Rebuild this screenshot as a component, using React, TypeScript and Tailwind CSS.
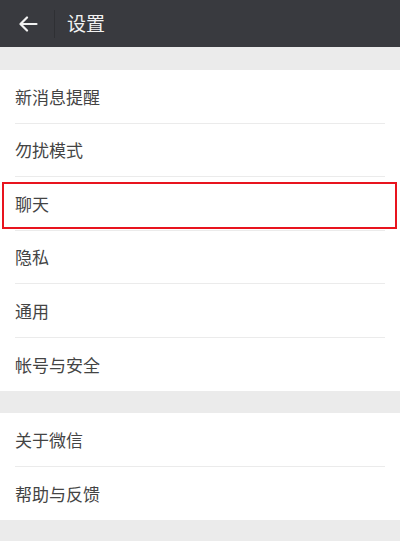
import React from 'react';

const groups: string[][] = [
  ['新消息提醒', '勿扰模式', '聊天', '隐私', '通用', '帐号与安全'],
  ['关于微信', '帮助与反馈'],
];

const font = { fontFamily: '"Noto Sans CJK SC", "Noto Sans", sans-serif' };

const Row = ({ label, last, highlight }: { label: string; last: boolean; highlight: boolean }) => (
  <div className="relative h-[53.5px] pl-[15px] pr-[15px]">
    <div className={`flex h-full items-center ${last ? '' : 'border-b border-[#ebebeb]'}`}>
      <span className="text-[17px] leading-none text-[#444444]">{label}</span>
    </div>
    {highlight && (
      <div className="absolute left-[2px] right-[3px] top-[5px] bottom-[2px] border-2 border-[#e8141e]" />
    )}
  </div>
);

export default function App() {
  return (
    <div className="w-[400px] h-[541px] overflow-hidden bg-[#ebebeb]" style={font}>
      {/* Header */}
      <div className="flex h-[47px] items-center bg-[#393a3f]">
        <div className="flex w-[54px] items-center justify-center pl-[2px]">
          <svg width="19" height="16" viewBox="0 0 19 16" fill="none" stroke="#f2f2f2" strokeWidth="2.2" strokeLinecap="round" strokeLinejoin="round">
            <path d="M17.5 8H2" />
            <path d="M8 1.5L1.5 8 8 14.5" />
          </svg>
        </div>
        <div className="h-[28px] w-px bg-[#2f3034]" />
        <span className="ml-[12px] text-[19px] text-[#f2f2f2]">设置</span>
      </div>

      <div className="h-[23px]" />
      {groups.map((items, gi) => (
        <React.Fragment key={gi}>
          <div className="bg-white">
            {items.map((label, i) => (
              <Row key={label} label={label} last={i === items.length - 1} highlight={label === '聊天'} />
            ))}
          </div>
          <div className="h-[22px]" />
        </React.Fragment>
      ))}
    </div>
  );
}
